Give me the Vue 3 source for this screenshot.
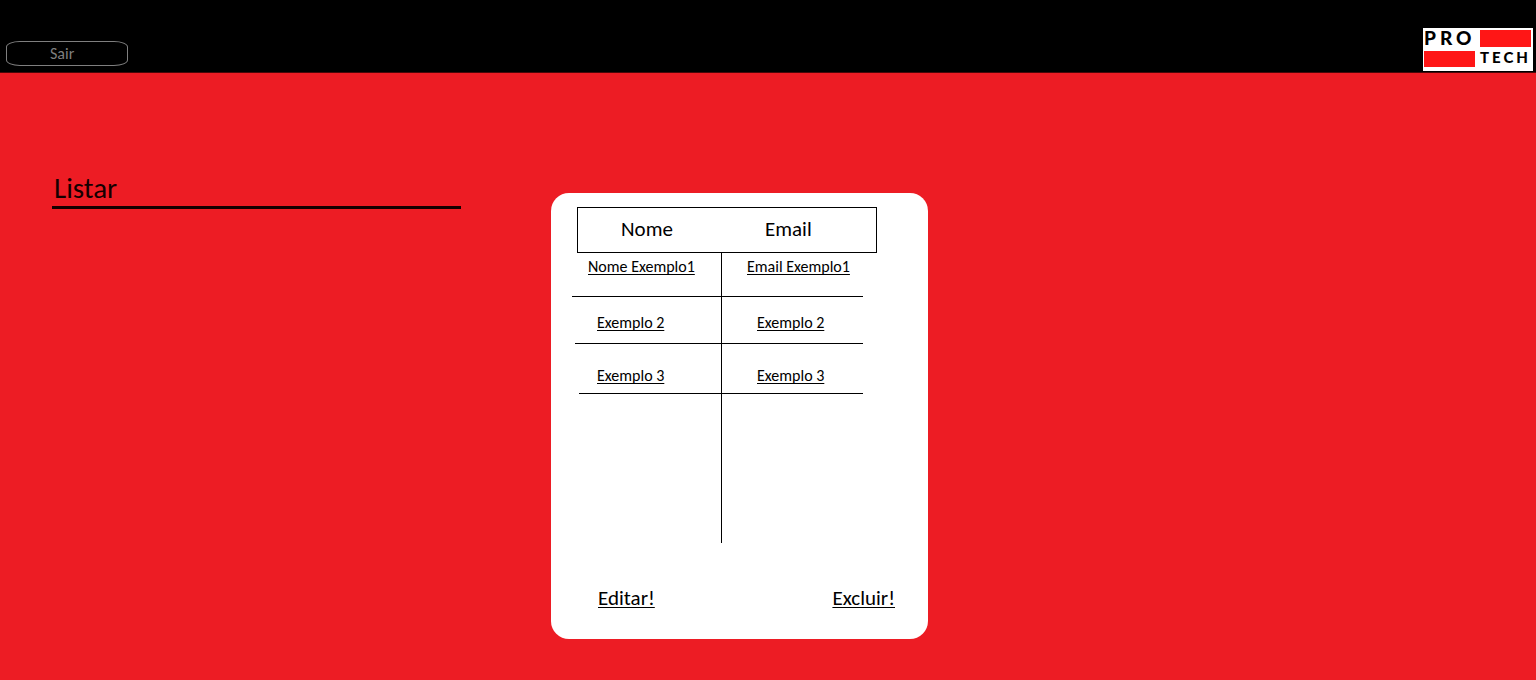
<script setup>
const rows = [
  { nome: 'Nome Exemplo1', email: 'Email Exemplo1', kind: 'first' },
  { nome: 'Exemplo 2', email: 'Exemplo 2', kind: 'second' },
  { nome: 'Exemplo 3', email: 'Exemplo 3', kind: 'third' },
]
</script>

<template>
  <div class="page">
    <header class="topbar">
      <button type="button" class="exit">Sair</button>
      <div class="logo">
        <span class="word">PRO</span>
        <span class="block"></span>
        <span class="block"></span>
        <span class="word small">TECH</span>
      </div>
    </header>

    <main class="content">
      <h1 class="title">Listar</h1>

      <section class="card">
        <table class="list">
          <thead>
            <tr class="head">
              <th scope="col">Nome</th>
              <th scope="col">Email</th>
            </tr>
          </thead>
          <tbody class="body">
            <tr v-for="row in rows" :key="row.kind" class="row" :class="row.kind">
              <td><a href="#">{{ row.nome }}</a></td>
              <td><a href="#">{{ row.email }}</a></td>
            </tr>
          </tbody>
        </table>

        <nav class="actions">
          <a href="#">Editar!</a>
          <a href="#">Excluir!</a>
        </nav>
      </section>
    </main>
  </div>
</template>

<style>
body {
  margin: 0;
  background: #ed1c24;
}
</style>

<style scoped>
.page {
  min-height: 100vh;
  background: #ed1c24;
  color: #000;
  font-family: Calibri, Carlito, Lato, sans-serif;
}

.topbar {
  display: flex;
  justify-content: space-between;
  align-items: flex-end;
  box-sizing: border-box;
  min-height: 72px;
  padding: 28px 3px 1px 6px;
  border-bottom: 1px solid #4a0608;
  background: #000;
}

.exit {
  box-sizing: border-box;
  width: 122px;
  height: 25px;
  margin-bottom: 5px;
  padding: 0 0 0 43px;
  border: 1px solid #7f7f7f;
  border-radius: 14px / 6px;
  background: transparent;
  color: #7f7f7f;
  font: 16px/24px Calibri, Carlito, Lato, sans-serif;
  text-align: left;
  cursor: pointer;
}

.logo {
  display: grid;
  grid-template-columns: 51px 51px;
  grid-template-rows: 17px 16px;
  gap: 4px 5px;
  box-sizing: border-box;
  width: 110px;
  height: 43px;
  padding: 2px 2px 4px 1px;
  background: #fff;
}

.block {
  background: #ff1616;
}

.word {
  color: #000;
  font-family: Lato, sans-serif;
  font-size: 19px;
  font-weight: 900;
  line-height: 15px;
  letter-spacing: 4px;
  white-space: nowrap;
}

.word.small {
  font-size: 15px;
  line-height: 12px;
  letter-spacing: 3px;
}

.content {
  display: grid;
  grid-template-columns: minmax(0, 499fr) 377px minmax(0, 608fr);
  align-items: start;
  padding: 99px 0 41px 52px;
}

.title {
  margin: 0 90px 0 0;
  padding: 0 0 2px 2px;
  border-bottom: 3px solid #140000;
  color: #140000;
  font-size: 29px;
  font-weight: 400;
  line-height: 32px;
}

.card {
  box-sizing: border-box;
  margin-top: 21px;
  padding: 14px 33px 27px 21px;
  border-radius: 18px;
  background: #fff;
}

.list {
  display: block;
  margin-right: 18px;
}

.list thead {
  display: block;
}

.head {
  display: grid;
  grid-template-columns: 144px 1fr;
  margin: 0 0 0 5px;
  border: 1px solid #000;
}

.head th {
  padding: 0 0 2px 43px;
  font-size: 21px;
  font-weight: 400;
  line-height: 42px;
  text-align: left;
}

.body {
  display: block;
  min-height: 290px;
  margin-right: 14px;
  background: linear-gradient(#000, #000) 149px 0 / 1px 100% no-repeat;
}

.row {
  display: grid;
  grid-template-columns: 1fr 141px;
  border-bottom: 1px solid #000;
  font-size: 16px;
  line-height: 20px;
}

.row td {
  padding: 0;
}

.row a,
.actions a {
  color: #000;
  text-decoration: underline;
  text-decoration-thickness: 1px;
  text-underline-offset: 2px;
  text-decoration-skip-ink: none;
}

.first {
  padding: 4px 0 19px 16px;
}

.first td + td {
  padding-left: 25px;
}

.second {
  margin-left: 3px;
  padding: 16px 0 10px 22px;
}

.third {
  margin-left: 7px;
  padding: 22px 0 7px 18px;
}

.second td + td,
.third td + td {
  padding-left: 35px;
}

.actions {
  display: flex;
  justify-content: space-between;
  margin-top: 41px;
  padding-left: 26px;
  font-size: 21px;
  line-height: 28px;
}
</style>
